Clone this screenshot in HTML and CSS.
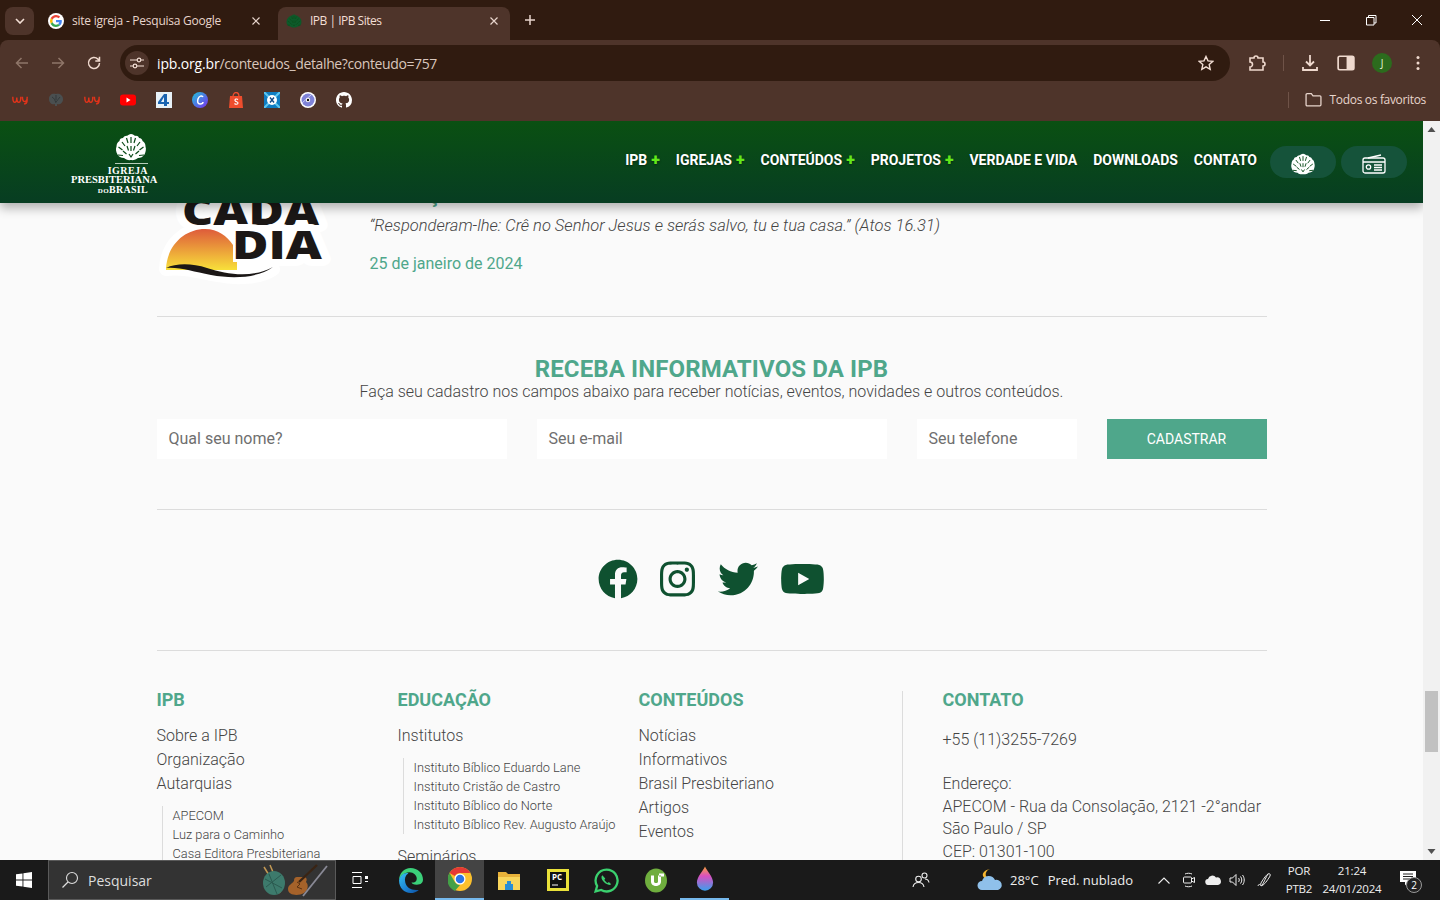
FILE: index.html
```html
<!DOCTYPE html>
<html lang="pt-BR">
<head>
<meta charset="utf-8">
<title>IPB | IPB Sites</title>
<link rel="stylesheet" href="styles.css">
</head>
<body>
<svg class="defs" width="0" height="0" aria-hidden="true">
  <symbol id="tree" viewBox="0 0 32 28">
    <path fill="currentColor" d="M16 1c2 0 3 1 4 2 2-.5 3.500.5 4 2 2 0 3.500 1.500 3.500 3 2 1 3 3 3 5.500 1 2.500 0 6-1 8-1.500 2.500-4 3.500-6.500 3.500-1.500 1.500-5 2.500-7 2-2.500.5-5.500-.5-7-2-3 0-5.500-1.500-6.500-3.500-1.500-2.500-2-5.500-1-8 0-2.500 1-4.500 3-5.500 0-2 1.500-3 3.500-3C9 3.500 11 2.500 12 3c1-1 2.500-2 4-2z"/>
    <path fill="none" stroke="#0a4a18" stroke-width="1.200" d="M16 4v6M11.500 5l1.500 5M20.500 5L19 10M7 9l3 4M25 9l-3 4M3.500 14l4 3M28.500 14l-4 3M16 13v5M12 13l1.500 4.500M20 13l-1.500 4.500M8 18l3.500 3M24 18l-3.500 3M3 22l5 .5M29 22l-5 .5M14 21l2 3 2-3"/>
  </symbol>
  <symbol id="g-logo" viewBox="0 0 48 48">
    <path fill="#fff" d="M24 0a24 24 0 1 0 0 48 24 24 0 0 0 0-48z"/>
    <path fill="#ea4335" d="M24 13c3 0 5.500 1 7.500 3l5-5C33.500 8.200 29 6 24 6c-7 0-13 4-16 10l6 4.600C15.500 16.200 19.400 13 24 13z"/>
    <path fill="#4285f4" d="M41.500 24.500c0-1.300-.1-2.600-.4-3.700H24v7h9.900c-.4 2.300-1.700 4.200-3.700 5.500l5.700 4.400c3.400-3.100 5.600-7.700 5.600-13.200z"/>
    <path fill="#fbbc05" d="M14 27.400a10.800 10.800 0 0 1 0-6.800L8 16a18 18 0 0 0 0 16z"/>
    <path fill="#34a853" d="M24 42c4.900 0 9-1.600 11.900-4.400l-5.700-4.400c-1.600 1.100-3.700 1.800-6.200 1.800-4.600 0-8.500-3.100-9.900-7.400L8 32c3 6 9 10 16 10z"/>
  </symbol>
  <symbol id="wy" viewBox="0 0 20 12">
    <path fill="none" stroke="currentColor" stroke-width="1.800" d="M1 2c0 5 1 7 2.500 7S6 6 6 3c0 3 1 6 2.500 6S11 7 11 2M13 2c0 4 1 6 3 6s3-2 3-6M19 5c0 4-1 6-4 6"/>
  </symbol>
</svg>

<div class="browser">
  <div class="tabstrip">
    <div class="tab-menu"><svg width="10" height="6" viewBox="0 0 10 6"><path d="M1 1l4 4 4-4" fill="none" stroke="#f3dfd5" stroke-width="1.600"/></svg></div>
    <div class="tab">
      <svg class="favicon" viewBox="0 0 16 16"><use href="#g-logo"/></svg>
      <span class="tab-title">site igreja - Pesquisa Google</span>
      <svg class="tab-x" viewBox="0 0 8 8"><path d="M.5.5l7 7M7.500.5l-7 7" stroke="#e8d5cc" stroke-width="1.200"/></svg>
    </div>
    <div class="tab tab-active">
      <svg class="favicon favicon-ipb" viewBox="0 0 32 28"><use href="#tree"/></svg>
      <span class="tab-title">IPB | IPB Sites</span>
      <svg class="tab-x" viewBox="0 0 8 8"><path d="M.5.5l7 7M7.500.5l-7 7" stroke="#e8d5cc" stroke-width="1.200"/></svg>
    </div>
    <svg class="tab-plus" viewBox="0 0 12 12"><path d="M6 1v10M1 6h10" stroke="#e8d5cc" stroke-width="1.500"/></svg>
    <div class="window-controls">
      <svg viewBox="0 0 12 12"><path d="M1 6.500h10" stroke="#fff"/></svg>
      <svg viewBox="0 0 12 12"><path d="M3.500 3V1.500H11V9H9M1.500 3.500H9V11H1.500z" fill="none" stroke="#fff"/></svg>
      <svg viewBox="0 0 12 12"><path d="M1 1l10 10M11 1L1 11" stroke="#fff"/></svg>
    </div>
  </div>
  <div class="toolbar">
    <svg class="tool tool-dim" viewBox="0 0 16 16"><path d="M14 8H3M7.500 3L2.500 8l5 5" fill="none" stroke="currentColor" stroke-width="1.500"/></svg>
    <svg class="tool tool-dim" viewBox="0 0 16 16"><path d="M2 8h11M8.500 3l5 5-5 5" fill="none" stroke="currentColor" stroke-width="1.500"/></svg>
    <svg class="tool" viewBox="0 0 16 16"><path d="M13.500 8a5.500 5.500 0 1 1-1.600-3.900L13.500 6M13.500 1.800V6H9.300" fill="none" stroke="currentColor" stroke-width="1.500"/></svg>
    <div class="omnibox">
      <div class="site-info"><svg viewBox="0 0 14 12" width="14" height="12"><g fill="none" stroke="#f3dfd5" stroke-width="1.200"><path d="M0 3h7M11 3h3M0 9h3M7 9h7"/><circle cx="9" cy="3" r="1.800"/><circle cx="5" cy="9" r="1.800"/></g></svg></div>
      <div class="url"><span class="url-host">ipb.org.br</span>/conteudos_detalhe?conteudo=757</div>
      <svg class="star" viewBox="0 0 16 16"><path d="M8 1.500l2 4.400 4.700.5-3.500 3.200 1 4.700L8 11.900l-4.200 2.400 1-4.700L1.300 6.400 6 5.900z" fill="none" stroke="#f3dfd5" stroke-width="1.400"/></svg>
    </div>
    <div class="tool-right">
      <svg class="tool" viewBox="0 0 18 18"><path d="M2 4h4a2 2 0 0 1 4 0h5v4a2 2 0 0 1 0 4v4H2v-3a2 2 0 0 0 0-5z" fill="none" stroke="currentColor" stroke-width="1.600"/></svg>
      <span class="tool-sep"></span>
      <svg class="tool" viewBox="0 0 18 18"><path d="M9 1v10M5 7.500L9 11.500l4-4" fill="none" stroke="currentColor" stroke-width="1.800"/><path d="M2 13v3h14v-3" fill="none" stroke="currentColor" stroke-width="1.800"/></svg>
      <svg class="tool" viewBox="0 0 16 16"><rect x="1" y="2" width="14" height="12" rx="1.500" fill="none" stroke="currentColor" stroke-width="1.500"/><rect x="8.500" y="2" width="6.500" height="12" fill="currentColor"/></svg>
      <div class="avatar">J</div>
      <svg class="tool" viewBox="0 0 16 16"><g fill="currentColor"><circle cx="8" cy="2.500" r="1.500"/><circle cx="8" cy="8" r="1.500"/><circle cx="8" cy="13.500" r="1.500"/></g></svg>
    </div>
  </div>
  <div class="bookmarks">
    <svg class="bm bm-wy" viewBox="0 0 20 12"><use href="#wy"/></svg>
    <svg class="bm" viewBox="0 0 16 16"><path d="M8 2c3-1 7 1 7 5s-3 6-6 5v2H7v-2c-3 1-6-1-6-5s3-6 7-5z" fill="#4a4f50"/><path d="M4 5c2 1 3 3 4 6M8 3v5M12 5c-1 2-3 3-4 5" stroke="#33393a" fill="none"/></svg>
    <svg class="bm bm-wy" viewBox="0 0 20 12"><use href="#wy"/></svg>
    <svg class="bm" viewBox="0 0 16 16"><rect y="2.500" width="16" height="11" rx="3" fill="#f00"/><path d="M6.500 5.500v5l4-2.500z" fill="#fff"/></svg>
    <svg class="bm" viewBox="0 0 16 16"><rect width="16" height="16" fill="#e8f1f7"/><path d="M8 2h3v8h2v2h-2v2H8v-2H2v-2zm0 3l-3 5h3z" fill="#1a63b0"/></svg>
    <svg class="bm" viewBox="0 0 16 16"><defs><linearGradient id="cv" x1="0" y1="0" x2="1" y2="1"><stop offset="0" stop-color="#1fc4d8"/><stop offset="1" stop-color="#7b2ff0"/></linearGradient></defs><circle cx="8" cy="8" r="8" fill="url(#cv)"/><path d="M11 5c-1-2-4-1-5 2s0 5 2 5 3-1 3-2" fill="none" stroke="#fff" stroke-width="1.500"/></svg>
    <svg class="bm" viewBox="0 0 16 16"><path d="M2 4h12l1 12H1z" fill="#ee4d2d"/><path d="M5 5c0-6 6-6 6 0" fill="none" stroke="#ee4d2d" stroke-width="1.300"/><path d="M10 7.500C9 6.500 6.500 7 7 8.500s3 1 3 2.500-2.500 1.500-3.500.5" fill="none" stroke="#fff" stroke-width="1.100"/></svg>
    <svg class="bm" viewBox="0 0 16 16"><rect width="16" height="16" fill="#0f7dc2"/><path d="M0 0l6 6M16 0l-6 6M0 16l6-6M16 16l-6-6" stroke="#5fc7ee" stroke-width="2"/><circle cx="8" cy="8" r="5" fill="#fff"/><path d="M6 5.500l4 5M10 5.500l-4 5" stroke="#0f4a86" stroke-width="1.400"/></svg>
    <svg class="bm" viewBox="0 0 16 16"><circle cx="8" cy="8" r="8" fill="#fff"/><circle cx="8" cy="8" r="6.500" fill="#7f83d8"/><path d="M2 11L11 3" stroke="#c9ccf2"/><circle cx="8" cy="8" r="2.200" fill="#fff"/><circle cx="8" cy="8" r="1.200" fill="#111"/></svg>
    <svg class="bm" viewBox="0 0 16 16"><path fill="#fff" d="M8 0C3.580 0 0 3.580 0 8c0 3.540 2.290 6.530 5.470 7.590.4.070.55-.17.550-.38 0-.19-.01-.82-.01-1.490-2.010.37-2.530-.49-2.690-.94-.09-.23-.48-.94-.82-1.130-.28-.15-.68-.52-.01-.53.63-.01 1.080.58 1.230.82.720 1.210 1.870.87 2.330.66.070-.52.280-.87.510-1.070-1.780-.2-3.640-.89-3.640-3.950 0-.87.310-1.590.82-2.150-.08-.2-.36-1.020.08-2.120 0 0 .67-.21 2.200.82.640-.18 1.320-.27 2-.27s1.360.09 2 .27c1.530-1.040 2.200-.82 2.200-.82.440 1.100.160 1.920.08 2.120.51.56.82 1.270.82 2.150 0 3.070-1.870 3.750-3.650 3.950.29.25.54.73.54 1.480 0 1.070-.01 1.930-.01 2.200 0 .21.150.46.550.38A8.010 8.010 0 0 0 16 8c0-4.420-3.580-8-8-8z"/></svg>
    <div class="bm-right">
      <span class="bm-sep"></span>
      <svg class="bm-folder" viewBox="0 0 16 14"><path d="M1 2.500a1 1 0 0 1 1-1h4l1.500 2H14a1 1 0 0 1 1 1V12a1 1 0 0 1-1 1H2a1 1 0 0 1-1-1z" fill="none" stroke="#e8d5cc" stroke-width="1.200"/></svg>
      <span class="bm-all">Todos os favoritos</span>
    </div>
  </div>
</div>

<div class="viewport">
  <div class="page">
    <header class="site-nav">
      <a class="logo">
        <svg class="logo-tree" viewBox="0 0 32 28"><use href="#tree"/></svg>
        <span class="logo-rule"></span>
        <span class="logo-l1">IGREJA</span>
        <span class="logo-l2">PRESBITERIANA</span>
        <span class="logo-l3"><small>DO</small>BRASIL</span>
      </a>
      <nav class="menu">
        <a>IPB <b>+</b></a>
        <a>IGREJAS <b>+</b></a>
        <a>CONTEÚDOS <b>+</b></a>
        <a>PROJETOS <b>+</b></a>
        <a>VERDADE E VIDA</a>
        <a>DOWNLOADS</a>
        <a>CONTATO</a>
      </nav>
      <div class="nav-btns">
        <span class="nav-btn"><svg class="nav-tree" viewBox="0 0 32 28"><use href="#tree"/></svg></span>
        <span class="nav-btn"><svg class="nav-radio" viewBox="0 0 24 20"><g fill="none" stroke="#fff" stroke-width="1.300"><rect x="1" y="4" width="22" height="15" rx="2"/><path d="M1 8h22M6 4l13-3"/><circle cx="6.500" cy="13" r="2.200"/><path d="M12 11h8M12 13.500h8M12 16h8"/></g></svg></span>
      </div>
    </header>

    <main class="content">
      <article class="devotional">
        <svg class="cada-logo" viewBox="0 0 173 125" role="img" aria-label="Cada dia">
          <defs><linearGradient id="sun" x1="0" y1="0" x2="0" y2="1"><stop offset="0" stop-color="#de5b3a"/><stop offset="1" stop-color="#f8e03a"/></linearGradient></defs>
          <path class="cada-halo" d="M9 104C10 80 28 64 48 64c14 0 24 8 30 18v22h38c-14 9-36 10-56 6-20-4-35-8-51-6z"/>
          <text class="cada-t" x="25" y="60" textLength="137" lengthAdjust="spacingAndGlyphs">CADA</text>
          <text class="cada-t cada-t2" x="75" y="94" textLength="90" lengthAdjust="spacingAndGlyphs">DIA</text>
          <path fill="url(#sun)" d="M9 104C10 80 28 64 48 64c13 0 22 7 28 16v17h4v8H9z"/>
          <path fill="#1b1716" d="M9 103c10-5 26-5 41 0 21 7 46 10 66-1-15 11-40 12-62 8-18-3-30-8-45-7z"/>
        </svg>
        <div class="dev-text">
          <h3 class="dev-title">Salvação</h3>
          <p class="dev-quote">“Responderam-lhe: Crê no Senhor Jesus e serás salvo, tu e tua casa.” (Atos 16.31)</p>
          <p class="dev-date">25 de janeiro de 2024</p>
        </div>
      </article>
      <hr class="rule">
      <section class="newsletter">
        <h2>RECEBA INFORMATIVOS DA IPB</h2>
        <p>Faça seu cadastro nos campos abaixo para receber notícias, eventos, novidades e outros conteúdos.</p>
        <form class="nl-form">
          <div class="field">Qual seu nome?</div>
          <div class="field">Seu e-mail</div>
          <div class="field">Seu telefone</div>
          <div class="nl-btn">CADASTRAR</div>
        </form>
      </section>
      <hr class="rule">
      <section class="social">
        <svg class="s-fb" viewBox="0 0 512 512"><path d="M504 256C504 119 393 8 256 8S8 119 8 256c0 123.780 90.690 226.380 209.250 245V327.690h-63V256h63v-54.640c0-62.150 37-96.480 93.670-96.480 27.140 0 55.520 4.840 55.520 4.840v61h-31.280c-30.800 0-40.410 19.120-40.410 38.730V256h68.780l-11 71.690h-57.780V501C413.310 482.380 504 379.780 504 256z"/></svg>
        <svg class="s-ig" viewBox="0 0 448 512"><path d="M224.100 141c-63.600 0-114.900 51.300-114.900 114.900s51.300 114.900 114.900 114.900S339 319.500 339 255.900 287.700 141 224.100 141zm0 189.600c-41.100 0-74.700-33.500-74.700-74.700s33.500-74.700 74.700-74.700 74.700 33.500 74.700 74.700-33.600 74.700-74.700 74.700zm146.400-194.300c0 14.900-12 26.800-26.800 26.800-14.900 0-26.800-12-26.800-26.800s12-26.800 26.800-26.800 26.800 12 26.800 26.800zm76.100 27.200c-1.700-35.900-9.900-67.700-36.200-93.900-26.200-26.200-58-34.400-93.900-36.200-37-2.100-147.900-2.100-184.900 0-35.800 1.700-67.600 9.900-93.900 36.100s-34.400 58-36.200 93.900c-2.100 37-2.100 147.900 0 184.900 1.700 35.900 9.900 67.700 36.200 93.900s58 34.400 93.900 36.200c37 2.100 147.900 2.100 184.900 0 35.900-1.700 67.700-9.900 93.900-36.200 26.200-26.200 34.400-58 36.200-93.900 2.100-37 2.100-147.800 0-184.800zM398.800 388c-7.800 19.600-22.900 34.700-42.600 42.600-29.500 11.700-99.500 9-132.100 9s-102.700 2.600-132.100-9c-19.600-7.800-34.700-22.900-42.600-42.600-11.700-29.500-9-99.500-9-132.100s-2.600-102.700 9-132.100c7.800-19.600 22.900-34.700 42.600-42.600 29.500-11.700 99.500-9 132.100-9s102.700-2.600 132.100 9c19.600 7.800 34.700 22.900 42.600 42.600 11.700 29.500 9 99.500 9 132.100s2.700 102.700-9 132.100z"/></svg>
        <svg class="s-tw" viewBox="0 0 512 512"><path d="M459.370 151.716c.325 4.548.325 9.097.325 13.645 0 138.720-105.583 298.558-298.558 298.558-59.452 0-114.680-17.219-161.137-47.106 8.447.974 16.568 1.299 25.340 1.299 49.055 0 94.213-16.568 130.274-44.832-46.132-.975-84.792-31.188-98.112-72.772 6.498.974 12.995 1.624 19.818 1.624 9.421 0 18.843-1.300 27.614-3.573-48.081-9.747-84.143-51.980-84.143-102.985v-1.299c13.969 7.797 30.214 12.670 47.431 13.319-28.264-18.843-46.781-51.005-46.781-87.391 0-19.492 5.197-37.360 14.294-52.954 51.655 63.675 129.300 105.258 216.365 109.807-1.624-7.797-2.599-15.918-2.599-24.040 0-57.828 46.782-104.934 104.934-104.934 30.213 0 57.502 12.670 76.670 33.137 23.715-4.548 46.456-13.320 66.599-25.340-7.798 24.366-24.366 44.833-46.132 57.827 21.117-2.273 41.584-8.122 60.426-16.243-14.292 20.791-32.161 39.308-52.628 54.253z"/></svg>
        <svg class="s-yt" viewBox="0 0 576 512"><path d="M549.655 124.083c-6.281-23.650-24.787-42.276-48.284-48.597C458.781 64 288 64 288 64S117.220 64 74.629 75.486c-23.497 6.322-42.003 24.947-48.284 48.597-11.412 42.867-11.412 132.305-11.412 132.305s0 89.438 11.412 132.305c6.281 23.650 24.787 41.500 48.284 47.821C117.220 448 288 448 288 448s170.780 0 213.371-11.486c23.497-6.321 42.003-24.171 48.284-47.821 11.412-42.867 11.412-132.305 11.412-132.305s0-89.438-11.412-132.305zm-317.510 213.508V175.185l142.739 81.205-142.739 81.201z"/></svg>
      </section>
      <hr class="rule">
      <footer class="foot">
        <div class="foot-col">
          <h4>IPB</h4>
          <a>Sobre a IPB</a>
          <a>Organização</a>
          <a>Autarquias</a>
          <div class="sub">
            <a>APECOM</a>
            <a>Luz para o Caminho</a>
            <a>Casa Editora Presbiteriana</a>
          </div>
        </div>
        <div class="foot-col">
          <h4>EDUCAÇÃO</h4>
          <a>Institutos</a>
          <div class="sub">
            <a>Instituto Bíblico Eduardo Lane</a>
            <a>Instituto Cristão de Castro</a>
            <a>Instituto Bíblico do Norte</a>
            <a>Instituto Bíblico Rev. Augusto Araújo</a>
          </div>
          <a class="after-sub">Seminários</a>
        </div>
        <div class="foot-col">
          <h4>CONTEÚDOS</h4>
          <a>Notícias</a>
          <a>Informativos</a>
          <a>Brasil Presbiteriano</a>
          <a>Artigos</a>
          <a>Eventos</a>
        </div>
        <div class="foot-col foot-contact">
          <h4>CONTATO</h4>
          <p class="phone">+55 (11)3255-7269</p>
          <p>Endereço:<br>APECOM - Rua da Consolação, 2121 -2°andar<br>São Paulo / SP<br>CEP: 01301-100</p>
        </div>
      </footer>
    </main>
  </div>
  <div class="scrollbar">
    <svg class="sb-arrow" viewBox="0 0 17 17"><path d="M4.500 11L8.500 6l4 5z" fill="#505050"/></svg>
    <div class="sb-track"><div class="sb-thumb"></div></div>
    <svg class="sb-arrow" viewBox="0 0 17 17"><path d="M4.500 6l4 5 4-5z" fill="#505050"/></svg>
  </div>
</div>

<div class="taskbar">
  <div class="tb-start"><svg viewBox="0 0 16 16" width="16" height="16"><path fill="#fff" d="M0 2.300L6.500 1.400v6.200H0zM7.400 1.300L16 0v7.600H7.400zM0 8.400h6.500v6.200L0 13.700zM7.400 8.400H16V16l-8.600-1.200z"/></svg></div>
  <div class="tb-search">
    <svg viewBox="0 0 18 18" width="18" height="18"><circle cx="11" cy="7" r="5.500" fill="none" stroke="#ddd" stroke-width="1.100"/><path d="M7 11l-5.500 5.500" stroke="#ddd" stroke-width="1.300"/></svg>
    <span>Pesquisar</span>
    <svg class="tb-deco" viewBox="0 0 68 36" width="68" height="36"><path d="M3 5l16 26" stroke="#c49a55" stroke-width="1.500"/><path d="M9 3l11 26" stroke="#c49a55" stroke-width="1.500"/><ellipse cx="13" cy="21" rx="11" ry="12" fill="#3d7a6c"/><path d="M4 17l17 9M5 25l15-12M8 12l8 20" stroke="#2b5a50"/><path d="M27 27c0-4 4-5 6-8 0-3 1-4 3-4s6 0 8 0c2 1 2 3 1 5 3 3 2 8-2 11-5 3-16 3-16-4z" fill="#a5622a"/><path d="M36 20l3 2-3 3 5 2" stroke="#5b3212" fill="none"/><path d="M38 20L56 3" stroke="#3a2414" stroke-width="2.400"/><path d="M42 34L66 4" stroke="#8a8a96" stroke-width="1.800"/></svg>
  </div>
  <div class="tb-slot tb-taskview"><svg viewBox="0 0 16 16" width="16" height="16"><path d="M0 .5h10M0 15.500h10M1 4.500h8v7H1z" fill="none" stroke="#fff"/><rect x="13" y="4" width="3" height="3" fill="#fff"/><path d="M13 9.500h3" stroke="#fff"/></svg></div>
  <div class="tb-slot"><svg viewBox="0 0 24 24" width="25" height="25"><defs><linearGradient id="edge" x1="0" y1="0" x2="1" y2="1"><stop offset="0" stop-color="#35c1f1"/><stop offset=".6" stop-color="#1b7fd1"/><stop offset="1" stop-color="#0c4f9e"/></linearGradient></defs><path d="M12 0c7 0 12 5 12 11 0 3-2 5-6 5-3 0-5-1-5-2 3 0 5-1 5-4 0-3-3-6-7-6C6 4 2 8 1 12 1 5 6 0 12 0z" fill="#3bd07a"/><path d="M1 12C2 7 6 4 10 5c-3 2-4 5-3 9 1 5 6 8 13 7-2 2-5 3-8 3C6 24 1 19 1 12z" fill="url(#edge)"/></svg></div>
  <div class="tb-slot tb-active"><svg viewBox="0 0 48 48" width="24" height="24"><circle cx="24" cy="24" r="24" fill="#fbc02d"/><path d="M24 0a24 24 0 0 1 20.800 12H24a12 12 0 0 0-10.400 6L3.200 12A24 24 0 0 1 24 0z" fill="#e53935"/><path d="M3.200 12l10.400 18A12 12 0 0 0 24 36l-10.400 11.800A24 24 0 0 1 3.200 12z" fill="#43a047"/><circle cx="24" cy="24" r="11" fill="#fff"/><circle cx="24" cy="24" r="8.500" fill="#2a75e6"/></svg></div>
  <div class="tb-slot"><svg viewBox="0 0 24 22" width="24" height="22"><path d="M1 3h8l2 2h12v3H1z" fill="#e8b23a"/><path d="M1 8h22v13H1z" fill="#f9d65c"/><path d="M8 21v-6h8v6" fill="#2a8ed6"/><path d="M10 15v-3h4v3" fill="#2a8ed6"/></svg></div>
  <div class="tb-slot"><svg viewBox="0 0 22 22" width="22" height="22"><rect width="22" height="22" fill="#eae13a"/><rect x="3" y="3" width="16" height="16" fill="#111"/><text class="pc-t" x="5" y="11">PC</text><path d="M5 16h6" stroke="#fff"/></svg></div>
  <div class="tb-slot"><svg viewBox="0 0 24 24" width="25" height="25"><path d="M12 1.500a10.500 10.500 0 0 0-9 15.800L1.500 22.500l5.400-1.400A10.500 10.500 0 1 0 12 1.500z" fill="none" stroke="#3bd16f" stroke-width="2.200"/><path d="M8 7c-1.500 1.500-1 4 1.500 6.500S15 17 16.500 15.500l-2.200-2-1.300.8c-1-.3-2.700-2-3-3l.8-1.300z" fill="#3bd16f"/></svg></div>
  <div class="tb-slot"><svg viewBox="0 0 24 24" width="24" height="25"><ellipse cx="12" cy="12" rx="11" ry="12" fill="#6fae3e"/><path d="M7 7v6c0 6 10 6 10 0V7h-3v6c0 2-4 2-4 0V7zM15 5h5v3h-5z" fill="#fff"/></svg></div>
  <div class="tb-slot tb-under"><svg viewBox="0 0 20 28" width="18" height="26"><defs><linearGradient id="drop" x1="0" y1="0" x2="0" y2="1"><stop offset="0" stop-color="#f9a03a"/><stop offset=".4" stop-color="#d94fc0"/><stop offset="1" stop-color="#3aa0ee"/></linearGradient></defs><path d="M10 0c2 5 9 11 9 18a9 9 0 0 1-18 0C1 11 8 5 10 0z" fill="url(#drop)"/></svg></div>
  <div class="tb-tray">
    <svg class="tray-people" viewBox="0 0 18 18" width="18" height="18"><g fill="none" stroke="#eee" stroke-width="1.100"><circle cx="6.500" cy="8" r="2.800"/><path d="M1 16c.5-3 2.500-4.500 5.500-4.500S11.500 13 12 16"/><circle cx="12.500" cy="4.500" r="2.500"/><path d="M13 8c2 0 3.500 1 4 3.500"/></g></svg>
    <svg class="tray-weather" viewBox="0 0 26 24" width="26" height="24"><path d="M13 1c-3 1-5 4-4 7 1 2 3 3 5 3-3 1-7 0-8-3-1-3 2-6 7-7z" fill="#f5b52e"/><path d="M5 22a4.500 4.500 0 0 1 0-9 7 7 0 0 1 13-1 5 5 0 0 1 3 10z" fill="#8fc0ea"/></svg>
    <span class="tray-temp">28°C</span>
    <span class="tray-cond">Pred. nublado</span>
    <svg class="tray-chev" viewBox="0 0 12 7" width="12" height="7"><path d="M.5 6.500L6 1l5.500 5.500" fill="none" stroke="#eee" stroke-width="1.100"/></svg>
    <svg class="tray-i1" viewBox="0 0 14 16" width="14" height="16"><g fill="none" stroke="#eee"><path d="M3 2c2-1 5-1 7 0M3 14c2 1 5 1 7 0"/><rect x="1.500" y="5" width="8" height="6" rx="1"/><path d="M9.500 7l3-1.500v5l-3-1.500"/></g></svg>
    <svg class="tray-i2" viewBox="0 0 16 10" width="16" height="10"><path d="M3.500 10a3 3 0 0 1-.5-6 4.500 4.500 0 0 1 8-1.500 3.500 3.500 0 0 1 2 7.500z" fill="#eee"/></svg>
    <svg class="tray-i3" viewBox="0 0 16 14" width="16" height="14"><g fill="none" stroke="#eee"><path d="M1 5h2.500L7 1.500v11L3.500 9H1z"/><path d="M9.500 5c1 1 1 3 0 4M11.500 3.500c1.700 2 1.700 5 0 7M13.500 2c2.300 3 2.300 7 0 10"/></g></svg>
    <svg class="tray-i4" viewBox="0 0 16 18" width="16" height="18"><path d="M1 15c1-3 2-1 3 0s5-9 7-12c1-1 3 0 2 2S8 13 6 14s-3 0-2-2 5-8 7-9" fill="none" stroke="#eee"/></svg>
    <div class="tray-lang"><span>POR</span><span>PTB2</span></div>
    <div class="tray-clock"><span>21:24</span><span>24/01/2024</span></div>
    <div class="tray-notif">
      <svg viewBox="0 0 16 15" width="16" height="15"><path d="M0 0h16v11h-8l-3 3.500V11H0z" fill="#fff"/><path d="M3 3h10M3 5.500h10M3 8h7" stroke="#222"/></svg>
      <span class="notif-badge">2</span>
    </div>
  </div>
</div>
</body>
</html>
```

FILE: styles.css
```css
* { box-sizing: border-box; }
html, body { margin: 0; height: 100%; }
body {
  width: 1440px;
  height: 900px;
  overflow: hidden;
  display: flex;
  flex-direction: column;
  font-family: Roboto, "Liberation Sans", sans-serif;
  background: #fafafa;
}
.defs { position: absolute; }

/* Browser chrome */
.browser { height: 121px; flex: none; background: #301b10; color: #f3dfd5; font-family: "Open Sans", "Noto Sans", sans-serif; }
.tabstrip { height: 40px; display: flex; align-items: flex-end; padding-left: 5px; position: relative; }
.tab-menu { width: 29px; height: 28px; background: #4e342a; border-radius: 8px; display: flex; align-items: center; justify-content: center; margin-bottom: 5px; }
.tab { width: 244px; height: 33px; display: flex; align-items: center; padding: 0 18px 6px 14px; font-size: 12px; color: #e8d5cc; border-radius: 8px 8px 0 0; }
.tab-active { background: #4e342a; width: 232px; padding: 0 12px 6px 8px; color: #f3dfd5; }
.favicon { width: 16px; height: 16px; flex: none; margin-right: 8px; }
.favicon-ipb { color: #0d5a2a; }
.tab-title { flex: 1; white-space: nowrap; overflow: hidden; letter-spacing: -.25px; }
.tab-active .tab-title { letter-spacing: -.5px; }
.tab-x { width: 8px; height: 8px; flex: none; }
.tab-plus { width: 12px; height: 12px; margin: 0 0 14px 14px; }
.window-controls { margin-left: auto; display: flex; align-self: stretch; align-items: center; }
.window-controls svg { width: 12px; height: 12px; margin: 0 17px; }
.window-controls svg:first-child { margin-left: 0; }
.toolbar { height: 40px; display: flex; align-items: center; padding: 6px 0 0 14px; color: #f3dfd5; background: #4e342a; border-radius: 8px 8px 0 0; }
.tool { width: 16px; height: 16px; flex: none; color: #efd9ce; }
.tool-dim { color: #8f7669; margin-right: 20px; }
.omnibox { margin-left: 18px; width: 1110px; height: 36px; flex: none; border-radius: 18px; background: #301b10; display: flex; align-items: center; padding: 0 16px 0 5px; }
.site-info { width: 24px; height: 24px; border-radius: 50%; background: #4e342a; display: flex; align-items: center; justify-content: center; margin-right: 8px; }
.url { flex: 1; font-size: 14px; color: #d9c6bc; letter-spacing: -.39px; white-space: nowrap; }
.url-host { color: #fff; letter-spacing: -.15px; }
.star { width: 16px; height: 16px; }
.tool-right { display: flex; align-items: center; }
.tool-right .tool { width: 18px; height: 18px; margin-left: 18px; }
.tool-right .tool:last-child { width: 16px; height: 16px; margin-left: 18px; }
.tool-sep { width: 1px; height: 16px; background: #6f5348; margin: 0 -1px 0 17px; }
.avatar { width: 20px; height: 20px; border-radius: 50%; background: #2c6b1d; color: #e8f0d8; font-size: 10px; display: flex; align-items: center; justify-content: center; margin-left: 17px; }
.bookmarks { height: 41px; display: flex; align-items: center; padding: 0 14px 2px 12px; gap: 20px; background: #4e342a; }
.bm { width: 16px; height: 16px; flex: none; color: #e0331a; }
.bm-right { margin-left: auto; display: flex; align-items: center; }
.bm-sep { width: 1px; height: 16px; background: #6f5348; margin-right: 16px; }
.bm-folder { width: 17px; height: 15px; margin-right: 8px; }
.bm-all { font-size: 12px; color: #e8d5cc; letter-spacing: -.33px; }

/* Viewport */
.viewport { flex: 1; min-height: 0; display: flex; }
.page { flex: 1; min-width: 0; position: relative; overflow: hidden; background: #fafafa; }
.scrollbar { width: 17px; flex: none; background: #f1f1f1; display: flex; flex-direction: column; }
.sb-arrow { width: 17px; height: 17px; flex: none; }
.sb-track { flex: 1; padding: 553px 2px 0; }
.sb-thumb { height: 61px; background: #c1c1c1; }

/* Site header */
.site-nav {
  position: absolute; top: 0; left: 0; right: 0; z-index: 2;
  height: 82px;
  display: flex; align-items: flex-start;
  padding: 0 16px 0 71px;
  background: linear-gradient(#0a5012, #073d22);
  box-shadow: 0 5px 10px rgba(0,0,0,.3);
}
.logo { width: 88px; display: flex; flex-direction: column; align-items: flex-end; color: #fff; font-family: "Liberation Serif", serif; font-weight: 700; padding-top: 12px; }
.logo-tree { width: 32px; height: 28px; margin-right: 12px; color: #fff; }
.logo-rule { width: 33px; height: 1px; background: #b7cdb9; margin: 2px 11px 2px 0; }
.logo-l1 { font-size: 10px; line-height: 9px; margin-right: 11px; letter-spacing: .4px; }
.logo-l2 { font-size: 10.500px; line-height: 10px; width: 88px; text-align: left; white-space: nowrap; }
.logo-l3 { font-size: 10px; line-height: 9px; margin-right: 11px; letter-spacing: .3px; }
.logo-l3 small { font-size: 7px; }
.menu { margin-left: auto; display: flex; gap: 16px; padding-top: 31px; }
.menu a { color: #fff; font-weight: 700; font-size: 14px; line-height: 16px; letter-spacing: 0; white-space: nowrap; text-shadow: 0 1px 2px rgba(0,0,0,.4); }
.menu b { color: #62e81a; font-weight: 900; font-size: 16px; line-height: 16px; margin-left: .5px; }
.nav-btns { display: flex; gap: 5px; margin-left: 13px; padding-top: 25px; }
.nav-btn { width: 66px; height: 32px; background: #15533a; border-radius: 16px; display: flex; align-items: center; justify-content: center; }
.nav-tree { width: 26px; height: 22px; color: #fff; margin-top: 3px; }
.nav-radio { width: 24px; height: 20px; margin-top: 3px; }

/* Content */
.content { width: 1110px; margin-left: 156.500px; padding-top: 44px; color: #444; font-weight: 300; }
.devotional { display: flex; gap: 40px; height: 125px; margin-bottom: 26px; }
.cada-logo { width: 173px; height: 125px; flex: none; overflow: visible; }
.cada-halo { fill: #fff; stroke: #fff; stroke-width: 14; stroke-linejoin: round; }
.cada-t { font-family: "Open Sans", sans-serif; font-weight: 800; font-size: 39px; fill: #1b1716; stroke: #fff; stroke-width: 14; stroke-linejoin: round; paint-order: stroke; }
.cada-t2 { font-size: 39px; }
.dev-text { flex: 1; padding-top: 15px; }
.dev-title { margin: 0; font-size: 24px; line-height: 28px; color: #4fa78b; font-weight: 500; }
.dev-quote { margin: 6px 0 0; font-size: 16.500px; line-height: 24px; font-style: italic; color: #444; }
.dev-date { margin: 14px 0 0; font-size: 16px; line-height: 24px; color: #4fa78b; font-weight: 400; }
.rule { border: 0; border-top: 1px solid #dcdcdc; margin: 0; }
.newsletter { text-align: center; padding-top: 40px; margin-bottom: 50px; }
.newsletter h2 { margin: 0; font-size: 24px; line-height: 24px; font-weight: 700; color: #4fa78b; letter-spacing: .12px; }
.newsletter p { margin: 0; font-size: 16px; line-height: 21px; color: #444; }
.nl-form { display: grid; grid-template-columns: 350px 350px 160px 160px; gap: 30px; margin-top: 17px; }
.field { height: 40px; background: #fff; padding: 0 12px; line-height: 40px; font-size: 16px; text-align: left; color: #6f6f6f; font-weight: 400; }
.nl-btn { height: 40px; background: #4fa78b; color: #fff; font-size: 14px; font-weight: 400; line-height: 40px; text-align: center; }
.social { height: 140px; display: flex; align-items: center; justify-content: center; fill: #0f5130; padding: 0 0 2px 0; }
.social svg { height: 40px; flex: none; display: block; }
.s-fb { width: 40px; margin-right: 22px; }
.s-ig { width: 35px; margin-right: 23px; }
.s-tw { width: 40px; margin-right: 22px; }
.s-yt { width: 45px; }
.foot { display: grid; grid-template-columns: 241px 241px 263px 1fr; padding-top: 40px; }
.foot-col h4 { margin: 0 0 15px; font-size: 18px; line-height: 18px; font-weight: 700; color: #4fa78b; }
.foot-col > a { display: block; font-size: 16px; line-height: 24px; color: #444; }
.sub { margin: 10px 0 0 5px; padding-left: 10px; border-left: 1px solid #dcdcdc; }
.sub a { display: block; font-size: 12.800px; line-height: 19px; color: #444; font-weight: 300; white-space: nowrap; }
.foot-col > .after-sub { margin-top: 11px; }
.foot-contact { border-left: 1px solid #dcdcdc; padding-left: 40px; height: 200px; }
.foot-contact p { margin: 0 0 22px; font-size: 16px; line-height: 22.400px; }
.foot-contact .phone { margin-top: 20px; }

/* Taskbar */
.taskbar { height: 40px; flex: none; background: #1a1a1a; display: flex; align-items: stretch; color: #eee; font-family: "Open Sans", "Noto Sans", sans-serif; }
.tb-start { width: 48px; display: flex; align-items: center; justify-content: center; }
.tb-search { width: 288px; background: #333; border: 1px solid #5a5a5a; display: flex; align-items: center; padding-left: 12px; font-size: 14px; color: #ddd; }
.tb-search span { margin-left: 9px; flex: 1; }
.tb-deco { margin-right: 6px; }
.tb-slot { width: 49px; display: flex; align-items: center; justify-content: center; flex: none; position: relative; }
.tb-taskview { width: 50px; padding-right: 3px; }
.tb-active { background: #444; border-bottom: 2px solid #76b9ed; }
.tb-under { border-bottom: 2px solid #76b9ed; }
.pc-t { font-family: "Open Sans", sans-serif; font-size: 8px; font-weight: 700; fill: #fff; }
.tb-tray { flex: 1; display: flex; align-items: center; font-size: 13px; position: relative; }
.tray-people { margin-left: 183px; }
.tray-weather { margin-left: 47px; }
.tray-temp { margin-left: 7px; }
.tray-cond { margin-left: 9px; white-space: nowrap; }
.tray-chev { margin-left: 25px; }
.tray-i1 { margin-left: 12px; }
.tray-i2 { margin-left: 9px; }
.tray-i3 { margin-left: 8px; }
.tray-i4 { margin-left: 12px; }
.tray-lang, .tray-clock { display: flex; flex-direction: column; align-items: center; font-size: 11.500px; line-height: 18px; letter-spacing: -.2px; }
.tray-lang { margin-left: 8px; width: 36px; }
.tray-clock { margin-left: 4px; width: 62px; }
.tray-notif { margin-left: 16px; position: relative; width: 24px; height: 24px; }
.tray-notif svg { position: absolute; left: 1px; top: 3px; }
.notif-badge { position: absolute; left: 7px; top: 9px; width: 16px; height: 16px; border-radius: 50%; background: #222; border: 1px solid #999; font-size: 10px; line-height: 14px; text-align: center; color: #fff; }
```
